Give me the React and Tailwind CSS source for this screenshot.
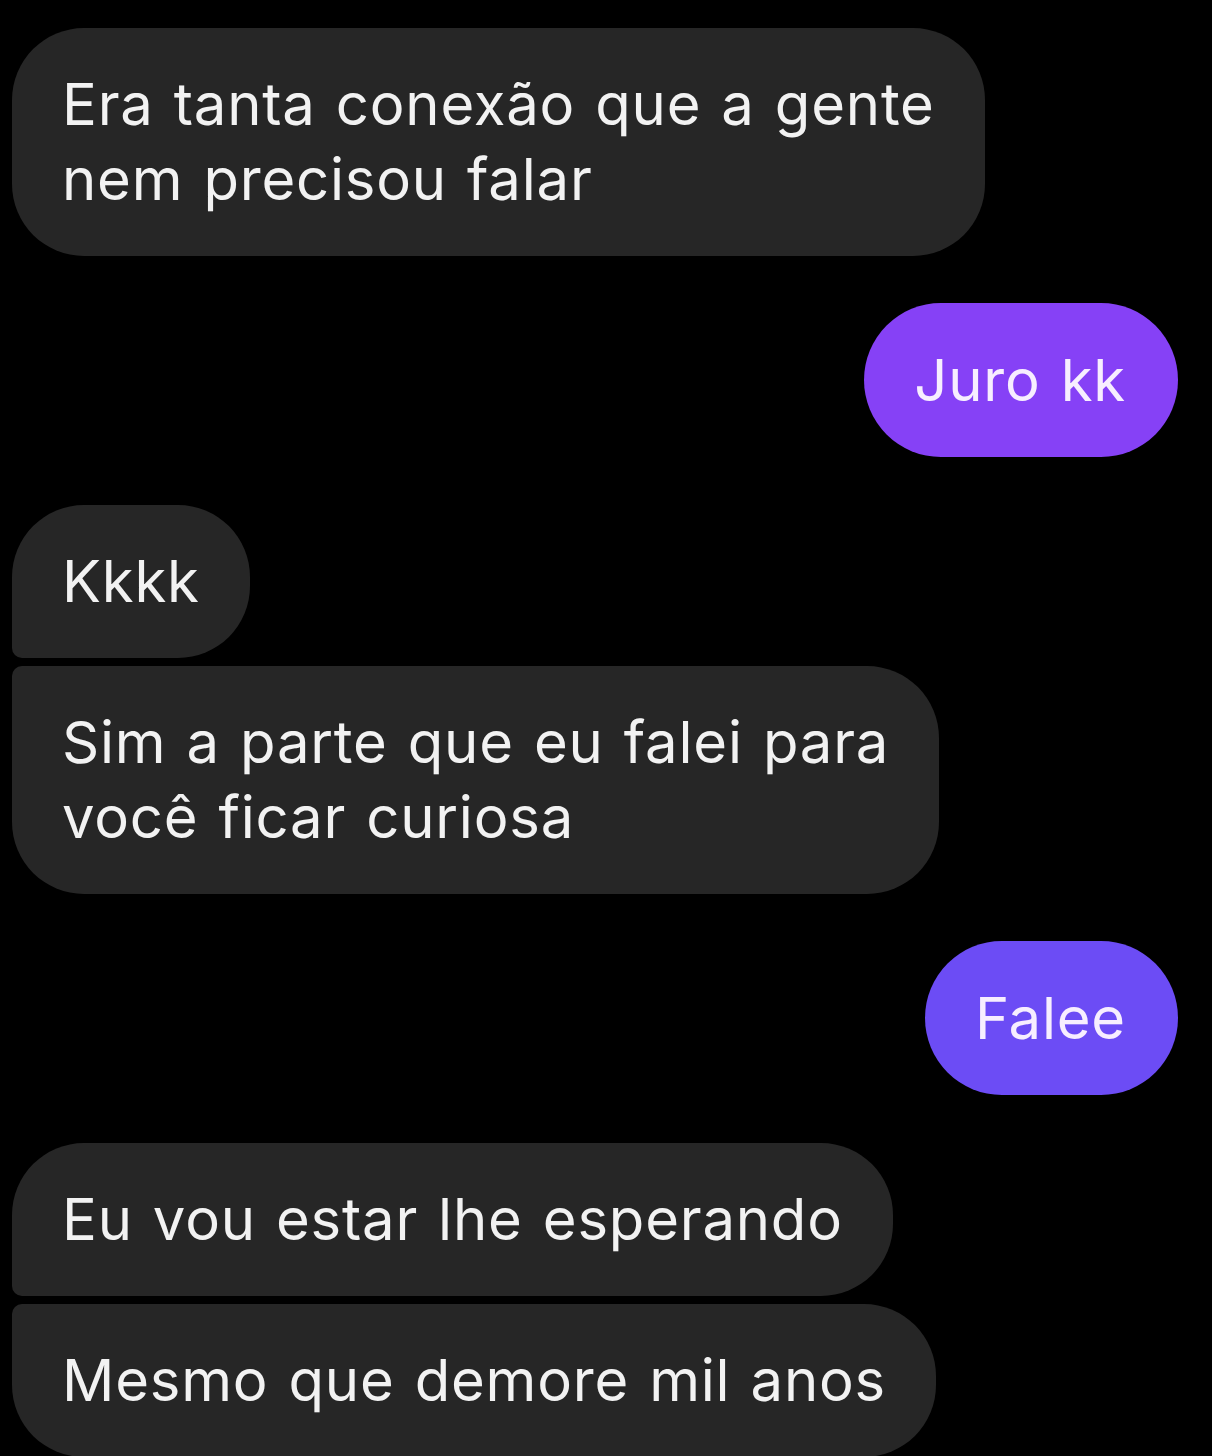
import React from 'react';

const messages = [
  { from: 'them', lines: ['Era tanta conexão que a gente', 'nem precisou falar'], corner: 'single' },
  { from: 'me', lines: ['Juro kk'], color: 'bg-[#8641f6]' },
  { from: 'them', lines: ['Kkkk'], corner: 'first' },
  { from: 'them', lines: ['Sim a parte que eu falei para', 'você ficar curiosa'], corner: 'last' },
  { from: 'me', lines: ['Falee'], color: 'bg-[#6c4cf5]' },
  { from: 'them', lines: ['Eu vou estar lhe esperando'], corner: 'first' },
  { from: 'them', lines: ['Mesmo que demore mil anos'], corner: 'last' },
];

const cornerClass = {
  single: 'rounded-[72px]',
  first: 'rounded-[72px] rounded-bl-[10px]',
  last: 'rounded-[72px] rounded-tl-[10px]',
};

const Bubble = ({ msg }) => {
  if (msg.from === 'me') {
    return (
      <div className="flex justify-end pr-[34px]">
        <div className={`${msg.color} rounded-full pl-[50px] pr-[52px] py-[39px] text-[#f7eeff] text-[58px] leading-[76px] tracking-[0.8px] [word-spacing:3px]`}>
          {msg.lines[0]}
        </div>
      </div>
    );
  }
  return (
    <div className="flex justify-start pl-[12px]">
      <div className={`bg-[#262626] ${cornerClass[msg.corner]} pl-[50px] pr-[50px] py-[39px] text-[#f2f2f2] text-[58px] leading-[75px] tracking-[0.8px] [word-spacing:3px]`}>
        {msg.lines.map((l, i) => (
          <div key={i} className="whitespace-nowrap">{l}</div>
        ))}
      </div>
    </div>
  );
};

export default function App() {
  // spacing between groups is 47px, inside a group 8px
  return (
    <div className="w-[1212px] h-[1456px] overflow-hidden bg-black pt-[28px]" style={{ fontFamily: 'Inter, "Noto Sans", sans-serif' }}>
      <div className="flex flex-col">
        <Bubble msg={messages[0]} />
        <div className="mt-[47px]"><Bubble msg={messages[1]} /></div>
        <div className="mt-[48px]"><Bubble msg={messages[2]} /></div>
        <div className="mt-[8px]"><Bubble msg={messages[3]} /></div>
        <div className="mt-[47px]"><Bubble msg={messages[4]} /></div>
        <div className="mt-[48px]"><Bubble msg={messages[5]} /></div>
        <div className="mt-[8px]"><Bubble msg={messages[6]} /></div>
      </div>
    </div>
  );
}
